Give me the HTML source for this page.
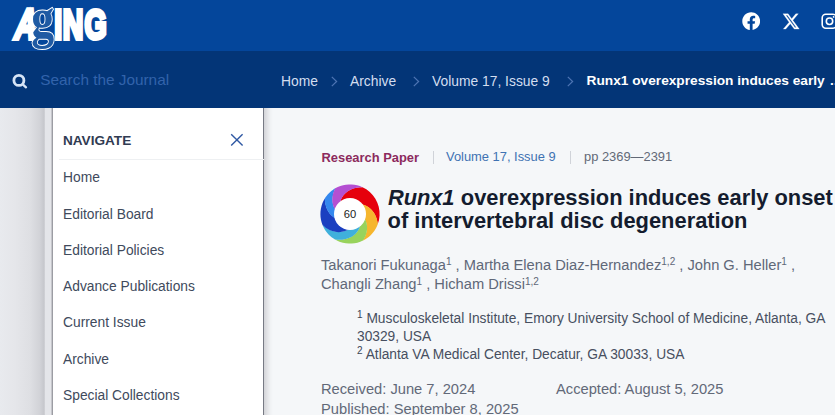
<!DOCTYPE html>
<html lang="en">
<head>
<meta charset="utf-8">
<title>Runx1 overexpression induces early onset of intervertebral disc degeneration - Aging</title>
<style>
*{box-sizing:border-box;margin:0;padding:0}
html,body{width:835px;height:415px;overflow:hidden}
body{font-family:"Liberation Sans",sans-serif;background:#f5f7f9;position:relative;color:#3a4556}
.abs{position:absolute;white-space:nowrap}
#top{position:absolute;left:0;top:0;width:835px;height:51px;background:#04469b}
#bar{position:absolute;left:0;top:51px;width:835px;height:57px;background:#033577}
#search{left:40.3px;top:69.9px;font-size:15.35px;line-height:20px;color:#3263ab}
.bc{top:72px;font-size:13.85px;line-height:18px;color:#d3def0}
.bc.b{font-weight:700;color:#fff}
#leftbg{position:absolute;left:0;top:108px;width:53px;height:307px;background:linear-gradient(90deg,#e8eaee 0px,#e5e6ea 15px,#dedfe3 30px,#d1d2d7 40px,#c5c6cb 44.3px,#e4e5e9 45px,#e4e5e9 50.8px,#a6a7ad 52.2px,#8b8c93 53px)}
#panel{position:absolute;left:53px;top:108px;width:210.5px;height:307px;background:#fff;border-right:1px solid #777a84}
#pshadow{position:absolute;left:264px;top:108px;width:9px;height:307px;background:linear-gradient(90deg,#d3d4d8 0,#e4e5e8 3.5px,#f0f2f4 6.5px,#f5f7f9 9px)}
#navh{left:63px;top:132px;font-size:13.6px;font-weight:700;line-height:18px;color:#303b52}
#navline{position:absolute;left:59px;top:158.5px;width:204.5px;height:1.4px;background:#eef0f2}
.ni{left:63px;font-size:13.8px;line-height:18px;color:#404a5c}
.meta{top:149.5px;font-size:12.9px;line-height:16px}
.sep{position:absolute;top:150.5px;width:1px;height:13.5px;background:#d0d3d9}
.title{left:388.1px;font-size:21.88px;line-height:24px;font-weight:700;color:#141c2e}
.au{font-size:14.7px;line-height:20px;color:#606878}
.au sup,.af sup{font-size:10px;line-height:0;vertical-align:baseline;position:relative;top:-4.6px}
.af sup{color:#3a4556}
.af{font-size:13.78px;line-height:18px;color:#474f60}
.dt{font-size:14.7px;line-height:20px;color:#626978}
</style>
</head>
<body>
<div id="top"></div>
<div id="bar"></div>
<svg id="logo" class="abs" style="left:0;top:0" width="120" height="55" viewBox="0 0 120 55">
<g font-family="'Liberation Sans',sans-serif" font-weight="700" font-size="43.2" fill="#fff" stroke="#fff" stroke-width="4.2" stroke-linejoin="miter">
<text transform="translate(12.9 39.3) skewX(-11) scale(.70 1)" x="0" y="0">A</text>
<text transform="translate(54.18 39.3) scale(.66 1)" x="0 13.18 46.1" y="0">ING</text>
</g>
<text transform="translate(31.3 36.8) scale(.82 1)" font-family="'Liberation Serif',serif" font-weight="700" font-size="56" fill="#1f5aa3" stroke="#fff" stroke-width="2" paint-order="stroke">g</text>
</svg>
<svg class="abs" style="left:11.9px;top:74px" width="18" height="18" viewBox="0 0 18 18"><circle cx="6.9" cy="6.4" r="5.0" fill="none" stroke="#d6e4f6" stroke-width="2.8"/><path d="M10.8 10.3 L14.0 13.3" stroke="#d6e4f6" stroke-width="2.3" stroke-linecap="round"/></svg>
<svg class="abs" style="left:741.9px;top:12.2px" width="18.4" height="18.4" viewBox="0 0 512 512"><path fill="#fff" d="M504 256C504 119 393 8 256 8S8 119 8 256c0 123.78 90.69 226.38 209.25 245V327.69h-63V256h63v-54.64c0-62.15 37-96.48 93.67-96.48 27.14 0 55.52 4.84 55.52 4.84v61h-31.28c-30.8 0-40.41 19.12-40.41 38.73V256h68.78l-11 71.69h-57.78V501C413.31 482.38 504 379.78 504 256z"/></svg>
<svg class="abs" style="left:782.2px;top:12.2px" width="18.2" height="18.9" viewBox="0 0 512 512" preserveAspectRatio="none"><path fill="#fff" stroke="#fff" stroke-width="7" d="M389.2 48h70.6L305.6 224.2 487 464H345L233.7 318.6 106.5 464H35.8L200.7 275.5 26.8 48H172.4L272.9 180.9 389.2 48zM364.4 421.8h39.1L151.1 88h-42L364.4 421.8z"/></svg>
<svg class="abs" style="left:821.2px;top:13.3px" width="16" height="16" viewBox="0 0 16 16"><rect x="1.2" y="1.3" width="14.4" height="13.9" rx="3.6" fill="none" stroke="#fff" stroke-width="1.6"/><circle cx="8.5" cy="8.25" r="3.2" fill="none" stroke="#fff" stroke-width="1.6"/><circle cx="12.6" cy="3.9" r="0.9" fill="#fff"/></svg>
<div id="search" class="abs">Search the Journal</div>

<div class="abs bc" style="left:281px">Home</div>
<div class="abs bc" style="left:350px">Archive</div>
<div class="abs bc" style="left:432px">Volume 17, Issue 9</div>
<div class="abs bc b" style="left:586.6px;font-size:13.7px">Runx1 overexpression induces early <span style="margin-left:1.6px">...</span></div>

<svg class="abs" style="left:331px;top:74.5px" width="8" height="13" viewBox="0 0 8 13"><path d="M0.8 1.9 L5.6 6.5 L0.8 11.1" fill="none" stroke="#4d74b3" stroke-width="1.25"/></svg>
<svg class="abs" style="left:413.3px;top:74.5px" width="8" height="13" viewBox="0 0 8 13"><path d="M0.8 1.9 L5.6 6.5 L0.8 11.1" fill="none" stroke="#4d74b3" stroke-width="1.25"/></svg>
<svg class="abs" style="left:566.8px;top:74.5px" width="8" height="13" viewBox="0 0 8 13"><path d="M0.8 1.9 L5.6 6.5 L0.8 11.1" fill="none" stroke="#4d74b3" stroke-width="1.25"/></svg>
<div id="leftbg"></div>
<div id="panel"></div>
<div id="pshadow"></div>
<div id="navh" class="abs">NAVIGATE</div>
<svg class="abs" style="left:230px;top:133px" width="14" height="14" viewBox="0 0 14 14"><path d="M1.2 1.2 L12.6 12.6 M12.6 1.2 L1.2 12.6" stroke="#2f58a3" stroke-width="1.4" fill="none"/></svg>
<div id="navline"></div>
<div class="abs ni" style="top:169.4px">Home</div>
<div class="abs ni" style="top:205.5px">Editorial Board</div>
<div class="abs ni" style="top:241.5px">Editorial Policies</div>
<div class="abs ni" style="top:277.5px">Advance Publications</div>
<div class="abs ni" style="top:313.5px">Current Issue</div>
<div class="abs ni" style="top:350.8px">Archive</div>
<div class="abs ni" style="top:387px">Special Collections</div>

<div class="abs meta" style="left:321.5px;font-weight:700;color:#8c2a5d">Research Paper</div>
<div class="sep" style="left:432.5px"></div>
<div class="abs meta" style="left:446px;top:149px;color:#3f72b2">Volume 17, Issue 9</div>
<div class="sep" style="left:570px"></div>
<div class="abs meta" style="left:584px;top:149px;color:#626977">pp 2369—2391</div>

<svg id="donut" class="abs" style="left:320.2px;top:184px" width="60" height="60" viewBox="0 0 60 60">
<path d="M19.96 18.85 L20.24 17.43 L20.68 15.99 L21.28 14.55 L22.04 13.13 L22.97 11.74 L24.06 10.41 L25.30 9.13 L26.70 7.94 L28.25 6.85 L29.95 5.88 L31.77 5.03 L33.72 4.32 L35.79 3.77 L37.95 3.39 L40.19 3.18 L42.51 3.17 L46.34 5.32 L49.81 8.00 L52.84 11.17 L55.37 14.75 L57.35 18.67 L58.72 22.84 L59.46 27.16 L59.56 31.55 L59.01 35.90 L57.63 40.61 L57.40 38.51 L57.01 36.48 L56.47 34.55 L55.81 32.71 L55.02 30.98 L54.12 29.37 L53.12 27.88 L52.03 26.51 L50.86 25.28 L49.63 24.18 L48.35 23.23 L47.04 22.41 L45.70 21.74 L44.35 21.21 L42.99 20.82 L41.66 20.56Z" fill="#e6000c"/>
<path d="M41.49 20.36 L42.83 20.59 L44.19 20.96 L45.55 21.47 L46.90 22.12 L48.23 22.91 L49.53 23.84 L50.77 24.92 L51.96 26.13 L53.07 27.47 L54.10 28.95 L55.03 30.55 L55.85 32.26 L56.55 34.09 L57.12 36.01 L57.54 38.03 L57.81 40.12 L56.96 42.23 L55.94 44.26 L54.77 46.21 L53.45 48.06 L52.00 49.81 L50.41 51.44 L48.71 52.94 L46.89 54.31 L44.98 55.53 L42.51 56.83 L43.47 55.33 L44.31 53.81 L45.02 52.27 L45.62 50.72 L46.09 49.18 L46.45 47.64 L46.70 46.12 L46.83 44.63 L46.85 43.17 L46.77 41.74 L46.59 40.37 L46.31 39.04 L45.94 37.78 L45.49 36.57 L44.95 35.44 L44.34 34.39Z" fill="#f6b62e"/>
<path d="M44.42 34.13 L45.05 35.18 L45.60 36.30 L46.08 37.50 L46.47 38.76 L46.77 40.08 L46.97 41.45 L47.08 42.87 L47.08 44.33 L46.98 45.83 L46.76 47.35 L46.43 48.90 L45.98 50.45 L45.41 52.00 L44.72 53.55 L43.91 55.09 L42.98 56.60 L40.27 57.76 L37.46 58.64 L34.58 59.24 L31.65 59.55 L28.71 59.57 L25.78 59.30 L22.89 58.73 L20.07 57.88 L17.35 56.76 L14.31 55.10 L16.84 55.49 L19.32 55.64 L21.73 55.56 L24.05 55.26 L26.27 54.76 L28.37 54.07 L30.33 53.21 L32.14 52.20 L33.78 51.05 L35.26 49.79 L36.55 48.43 L37.66 47.00 L38.58 45.52 L39.32 44.01 L39.86 42.49 L40.23 40.97Z" fill="#98d35c"/>
<path d="M40.42 40.79 L40.08 42.31 L39.56 43.85 L38.85 45.37 L37.96 46.87 L36.87 48.32 L35.60 49.69 L34.15 50.98 L32.52 52.16 L30.73 53.20 L28.79 54.09 L26.70 54.82 L24.49 55.36 L22.17 55.70 L19.76 55.82 L17.28 55.72 L14.75 55.37 L13.15 54.34 L11.61 53.20 L10.16 51.96 L8.78 50.64 L7.49 49.22 L6.30 47.73 L5.20 46.16 L4.21 44.53 L3.33 42.84 L2.37 40.61 L4.00 42.12 L5.71 43.47 L7.47 44.63 L9.28 45.62 L11.10 46.43 L12.94 47.06 L14.77 47.52 L16.58 47.81 L18.35 47.94 L20.07 47.91 L21.73 47.73 L23.32 47.41 L24.81 46.96 L26.22 46.39 L27.51 45.72 L28.69 44.94Z" fill="#3fb0dc"/>
<path d="M28.95 44.96 L27.79 45.76 L26.50 46.46 L25.11 47.05 L23.62 47.53 L22.04 47.87 L20.39 48.08 L18.67 48.14 L16.89 48.04 L15.08 47.78 L13.24 47.35 L11.39 46.75 L9.55 45.98 L7.73 45.02 L5.95 43.89 L4.22 42.58 L2.56 41.09 L1.63 38.46 L0.96 35.75 L0.55 32.99 L0.40 30.21 L0.51 27.42 L0.89 24.66 L1.52 21.94 L2.40 19.30 L3.53 16.75 L5.18 13.88 L5.14 15.68 L5.22 17.44 L5.42 19.15 L5.73 20.81 L6.15 22.39 L6.66 23.91 L7.26 25.35 L7.94 26.70 L8.71 27.97 L9.54 29.15 L10.44 30.23 L11.39 31.22 L12.39 32.10 L13.42 32.89 L14.49 33.56 L15.58 34.13Z" fill="#1b3fc0"/>
<path d="M15.66 34.39 L14.56 33.83 L13.48 33.17 L12.43 32.41 L11.41 31.54 L10.45 30.58 L9.53 29.51 L8.68 28.35 L7.89 27.09 L7.18 25.74 L6.55 24.32 L6.02 22.81 L5.58 21.23 L5.24 19.58 L5.01 17.88 L4.89 16.12 L4.90 14.31 L5.69 13.11 L6.55 11.94 L7.46 10.82 L8.42 9.74 L9.44 8.71 L10.50 7.73 L11.61 6.80 L12.77 5.93 L13.97 5.12 L15.65 4.11 L14.88 5.62 L14.22 7.14 L13.67 8.67 L13.23 10.19 L12.90 11.71 L12.68 13.20 L12.56 14.68 L12.55 16.12 L12.63 17.52 L12.80 18.89 L13.07 20.20 L13.42 21.46 L13.85 22.66 L14.36 23.80 L14.94 24.87 L15.58 25.87Z" fill="#3488ee"/>
<path d="M15.51 26.12 L14.85 25.13 L14.25 24.07 L13.73 22.94 L13.27 21.75 L12.90 20.50 L12.61 19.19 L12.41 17.83 L12.31 16.42 L12.30 14.98 L12.39 13.51 L12.59 12.01 L12.89 10.49 L13.30 8.96 L13.82 7.42 L14.45 5.89 L15.20 4.37 L17.73 3.07 L20.36 2.01 L23.09 1.22 L25.88 0.69 L28.71 0.43 L31.55 0.44 L34.38 0.73 L37.16 1.28 L39.88 2.10 L42.98 3.40 L40.66 3.37 L38.41 3.53 L36.24 3.87 L34.17 4.39 L32.21 5.06 L30.37 5.88 L28.66 6.83 L27.09 7.89 L25.67 9.06 L24.40 10.31 L23.29 11.62 L22.34 13.00 L21.55 14.40 L20.93 15.83 L20.47 17.26 L20.16 18.68Z" fill="#b44fd2"/>
<circle cx="30" cy="30" r="16" fill="#fff"/>
<text x="30" y="34" text-anchor="middle" font-family="'Liberation Sans',sans-serif" font-size="11.2" fill="#222">60</text>
</svg>
<div class="abs title" style="top:185.7px"><i style="letter-spacing:-.15px;margin-right:.5px">Runx1</i> overexpression induces early onset</div>
<div class="abs title" style="top:209px;left:387.6px">of intervertebral disc degeneration</div>

<div class="abs au" style="left:321px;top:254.5px">Takanori Fukunaga<sup>1</sup> , Martha Elena Diaz-Hernandez<sup>1,2</sup> , John G. Heller<sup>1</sup> ,</div>
<div class="abs au" style="left:321px;top:274.3px">Changli Zhang<sup>1</sup> , Hicham Drissi<sup>1,2</sup></div>

<div class="abs af" style="left:357px;top:310px"><sup>1</sup> Musculoskeletal Institute, Emory University School of Medicine, Atlanta, GA</div>
<div class="abs af" style="left:357px;top:328px">30329, USA</div>
<div class="abs af" style="left:357px;top:346px"><sup>2</sup> Atlanta VA Medical Center, Decatur, GA 30033, USA</div>

<div class="abs dt" style="left:321px;top:379px">Received: June 7, 2024</div>
<div class="abs dt" style="left:556px;top:379px">Accepted: August 5, 2025</div>
<div class="abs dt" style="left:321px;top:399px">Published: September 8, 2025</div>
</body>
</html>
